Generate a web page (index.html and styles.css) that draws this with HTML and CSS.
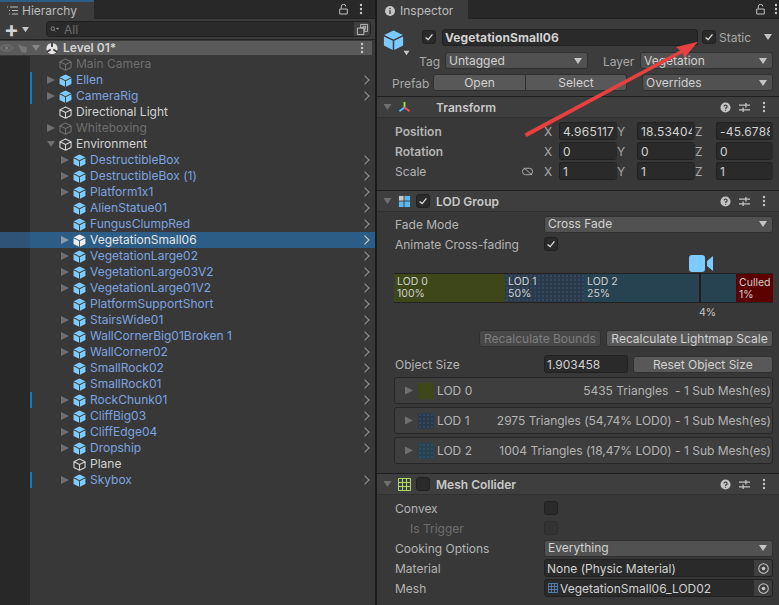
FILE: index.html
```html
<!DOCTYPE html>
<html lang="en">
<head>
<meta charset="utf-8">
<title>Unity Editor</title>
<link rel="stylesheet" href="styles.css">
</head>
<body>
<svg class="defs" width="0" height="0" aria-hidden="true">
  <symbol id="cube-line" viewBox="0 0 14 14"><path d="M7 1 L13 4 V10.2 L7 13.2 L1 10.2 V4 Z M1 4 L7 7 L13 4 M7 7 V13.2" fill="none" stroke="currentColor" stroke-width="1.2" stroke-linejoin="round"/></symbol>
  <symbol id="cube-fill" viewBox="0 0 14 14"><path d="M7 .6 L13.2 3.6 L7 6.6 L.8 3.6 Z" fill="currentColor"/><path d="M.6 4.6 L6.5 7.5 V13.6 L.6 10.7 Z M13.4 4.6 L7.5 7.5 V13.6 L13.4 10.7 Z" fill="currentColor"/></symbol>
  <symbol id="chev" viewBox="0 0 8 10"><path d="M1.500 .6 L6 5 L1.500 9.400" fill="none" stroke="currentColor" stroke-width="1.2"/></symbol>
  <symbol id="tri-r" viewBox="0 0 8 8"><path d="M0 0 L8 4 L0 8 Z" fill="currentColor"/></symbol>
  <symbol id="tri-d" viewBox="0 0 8 8"><path d="M0 1 H8 L4 7 Z" fill="currentColor"/></symbol>
  <symbol id="check" viewBox="0 0 14 14"><path d="M3 7.500 L6 10 L11 4" fill="none" stroke="currentColor" stroke-width="1.5"/></symbol>
  <symbol id="lock" viewBox="0 0 10 12"><path d="M2.500 5 V3 A2.500 2.500 0 0 1 7.600 2.600 M.8 5.500 H9.200 V11 H.8 Z" fill="none" stroke="currentColor" stroke-width="1.1"/></symbol>
  <symbol id="dots" viewBox="0 0 4 12"><circle cx="2" cy="2" r="1.200" fill="currentColor"/><circle cx="2" cy="6" r="1.200" fill="currentColor"/><circle cx="2" cy="10" r="1.200" fill="currentColor"/></symbol>
  <symbol id="help" viewBox="0 0 12 12"><circle cx="6" cy="6" r="5.500" fill="currentColor"/><path d="M4.400 4.700 A1.700 1.600 0 1 1 6 6.600 V7.400 M6 8.400 V9.600" fill="none" stroke="#3e3e3e" stroke-width="1.300"/></symbol>
  <symbol id="sliders" viewBox="0 0 12 12"><path d="M0 3.500 H12 M0 8.500 H12 M7.500 1 V6 M4.500 6 V11" fill="none" stroke="currentColor" stroke-width="1.400"/></symbol>
  <symbol id="target" viewBox="0 0 12 12"><circle cx="6" cy="6" r="5.200" fill="none" stroke="currentColor" stroke-width="1.100"/><circle cx="6" cy="6" r="2" fill="currentColor"/></symbol>
</svg>

<div class="app">
  <section class="hierarchy">
    <header class="tabbar">
      <div class="tab tab-h">
        <svg class="tab-list" viewBox="0 0 11 9"><path d="M0 1 H1 M3 1 H11 M2 4.500 H3 M5 4.500 H11 M2 8 H3 M5 8 H11" stroke="currentColor" fill="none"/></svg>
        <span>Hierarchy</span>
      </div>
      <div class="tab-tools">
        <svg class="ico-lock"><use href="#lock"/></svg>
        <svg class="ico-dots"><use href="#dots"/></svg>
      </div>
    </header>
    <div class="toolbar">
      <span class="plus">+</span>
      <svg class="tri-sm"><use href="#tri-d"/></svg>
      <div class="search">
        <svg class="search-ico" viewBox="0 0 10 8"><circle cx="3" cy="3" r="2" fill="none" stroke="currentColor"/><path d="M4.500 4.500 L6.500 6.500 M7 2.500 H10 L8.500 4 Z" stroke="currentColor" fill="currentColor" stroke-width=".6"/></svg>
        <span class="search-text">All</span>
        <span class="search-end"><svg viewBox="0 0 14 14"><path d="M5 1.500 H12.500 V9 H9 V5 H5 Z M1.500 5.500 H8.500 V12.500 H1.500 Z M7 3.500 H10.500 V7" fill="none" stroke="currentColor"/></svg></span>
      </div>
    </div>
    <div class="scene-row">
      <svg class="eye" viewBox="0 0 14 9"><path d="M0 4.500 Q7 -2.500 14 4.500 Q7 11.500 0 4.500 Z" fill="none" stroke="currentColor"/><circle cx="7" cy="4.500" r="2" fill="currentColor"/></svg>
      <svg class="hand" viewBox="0 0 12 12"><path d="M1 1 L5 3 L11 5 L10 11 L5 10 Z" fill="currentColor"/></svg>
      <svg class="scene-tri"><use href="#tri-d"/></svg>
      <svg class="scene-ico" viewBox="0 0 14 14"><circle cx="7" cy="7" r="6.500" fill="#e6e6e6"/><path d="M7 7 V0 M7 7 L1 11 M7 7 L13 11" stroke="#3c3c3c" stroke-width="2.200"/><circle cx="7" cy="7" r="2" fill="#e6e6e6"/></svg>
      <span class="scene-name">Level 01*</span>
      <svg class="scene-dots"><use href="#dots"/></svg>
    </div>
    <div class="tree">
      <div class="row l1 dim"><i class="tw"></i><svg class="cb"><use href="#cube-line"/></svg><span>Main Camera</span></div>
      <div class="row l1 blue mark"><svg class="tw"><use href="#tri-r"/></svg><svg class="cb fill"><use href="#cube-fill"/></svg><span>Ellen</span><svg class="chev"><use href="#chev"/></svg></div>
      <div class="row l1 blue mark"><svg class="tw"><use href="#tri-r"/></svg><svg class="cb fill"><use href="#cube-fill"/></svg><span>CameraRig</span><svg class="chev"><use href="#chev"/></svg></div>
      <div class="row l1"><i class="tw"></i><svg class="cb"><use href="#cube-line"/></svg><span>Directional Light</span></div>
      <div class="row l1 dim"><svg class="tw"><use href="#tri-r"/></svg><svg class="cb"><use href="#cube-line"/></svg><span>Whiteboxing</span></div>
      <div class="row l1"><svg class="tw"><use href="#tri-d"/></svg><svg class="cb"><use href="#cube-line"/></svg><span>Environment</span></div>
      <div class="row l2 blue"><svg class="tw"><use href="#tri-r"/></svg><svg class="cb fill"><use href="#cube-fill"/></svg><span>DestructibleBox</span><svg class="chev"><use href="#chev"/></svg></div>
      <div class="row l2 blue"><svg class="tw"><use href="#tri-r"/></svg><svg class="cb fill"><use href="#cube-fill"/></svg><span>DestructibleBox (1)</span><svg class="chev"><use href="#chev"/></svg></div>
      <div class="row l2 blue"><svg class="tw"><use href="#tri-r"/></svg><svg class="cb fill"><use href="#cube-fill"/></svg><span>Platform1x1</span><svg class="chev"><use href="#chev"/></svg></div>
      <div class="row l2 blue"><i class="tw"></i><svg class="cb fill"><use href="#cube-fill"/></svg><span>AlienStatue01</span><svg class="chev"><use href="#chev"/></svg></div>
      <div class="row l2 blue"><i class="tw"></i><svg class="cb fill"><use href="#cube-fill"/></svg><span>FungusClumpRed</span><svg class="chev"><use href="#chev"/></svg></div>
      <div class="row l2 selected"><svg class="tw"><use href="#tri-r"/></svg><svg class="cb fill"><use href="#cube-fill"/></svg><span>VegetationSmall06</span><svg class="chev"><use href="#chev"/></svg></div>
      <div class="row l2 blue"><svg class="tw"><use href="#tri-r"/></svg><svg class="cb fill"><use href="#cube-fill"/></svg><span>VegetationLarge02</span><svg class="chev"><use href="#chev"/></svg></div>
      <div class="row l2 blue"><svg class="tw"><use href="#tri-r"/></svg><svg class="cb fill"><use href="#cube-fill"/></svg><span>VegetationLarge03V2</span><svg class="chev"><use href="#chev"/></svg></div>
      <div class="row l2 blue"><svg class="tw"><use href="#tri-r"/></svg><svg class="cb fill"><use href="#cube-fill"/></svg><span>VegetationLarge01V2</span><svg class="chev"><use href="#chev"/></svg></div>
      <div class="row l2 blue"><i class="tw"></i><svg class="cb fill"><use href="#cube-fill"/></svg><span>PlatformSupportShort</span><svg class="chev"><use href="#chev"/></svg></div>
      <div class="row l2 blue"><svg class="tw"><use href="#tri-r"/></svg><svg class="cb fill"><use href="#cube-fill"/></svg><span>StairsWide01</span><svg class="chev"><use href="#chev"/></svg></div>
      <div class="row l2 blue"><svg class="tw"><use href="#tri-r"/></svg><svg class="cb fill"><use href="#cube-fill"/></svg><span>WallCornerBig01Broken 1</span><svg class="chev"><use href="#chev"/></svg></div>
      <div class="row l2 blue"><svg class="tw"><use href="#tri-r"/></svg><svg class="cb fill"><use href="#cube-fill"/></svg><span>WallCorner02</span><svg class="chev"><use href="#chev"/></svg></div>
      <div class="row l2 blue"><i class="tw"></i><svg class="cb fill"><use href="#cube-fill"/></svg><span>SmallRock02</span><svg class="chev"><use href="#chev"/></svg></div>
      <div class="row l2 blue"><i class="tw"></i><svg class="cb fill"><use href="#cube-fill"/></svg><span>SmallRock01</span><svg class="chev"><use href="#chev"/></svg></div>
      <div class="row l2 blue mark"><svg class="tw"><use href="#tri-r"/></svg><svg class="cb fill"><use href="#cube-fill"/></svg><span>RockChunk01</span><svg class="chev"><use href="#chev"/></svg></div>
      <div class="row l2 blue"><svg class="tw"><use href="#tri-r"/></svg><svg class="cb fill"><use href="#cube-fill"/></svg><span>CliffBig03</span><svg class="chev"><use href="#chev"/></svg></div>
      <div class="row l2 blue"><svg class="tw"><use href="#tri-r"/></svg><svg class="cb fill"><use href="#cube-fill"/></svg><span>CliffEdge04</span><svg class="chev"><use href="#chev"/></svg></div>
      <div class="row l2 blue"><svg class="tw"><use href="#tri-r"/></svg><svg class="cb fill"><use href="#cube-fill"/></svg><span>Dropship</span><svg class="chev"><use href="#chev"/></svg></div>
      <div class="row l2"><i class="tw"></i><svg class="cb"><use href="#cube-line"/></svg><span>Plane</span></div>
      <div class="row l2 blue mark"><svg class="tw"><use href="#tri-r"/></svg><svg class="cb fill"><use href="#cube-fill"/></svg><span>Skybox</span><svg class="chev"><use href="#chev"/></svg></div>
    </div>
  </section>

  <section class="inspector">
    <header class="tabbar">
      <div class="tab tab-i">
        <svg class="tab-info" viewBox="0 0 10 10"><circle cx="5" cy="5" r="5" fill="currentColor"/><path d="M5 2 V3.200 M5 4.300 V8" stroke="#3c3c3c" stroke-width="1.400"/></svg>
        <span>Inspector</span>
      </div>
      <div class="tab-tools tools-i">
        <svg class="ico-lock"><use href="#lock"/></svg>
        <svg class="ico-dots"><use href="#dots"/></svg>
      </div>
    </header>

    <div class="objhead">
      <div class="obj-main">
        <div class="bigicon">
          <svg class="bigcube"><use href="#cube-fill"/></svg>
          <svg class="tri-xs"><use href="#tri-d"/></svg>
        </div>
        <span class="chk on"><svg><use href="#check"/></svg></span>
        <span class="field namefield">VegetationSmall06</span>
        <span class="chk on"><svg><use href="#check"/></svg></span>
        <span class="static">Static</span>
        <svg class="tri-md static-tri"><use href="#tri-d"/></svg>
      </div>
      <div class="obj-tag">
        <span class="lab tag-lab">Tag</span>
        <span class="drop drop-tag">Untagged<svg class="tri-md"><use href="#tri-d"/></svg></span>
        <span class="lab layer-lab">Layer</span>
        <span class="drop drop-layer">Vegetation<svg class="tri-md"><use href="#tri-d"/></svg></span>
      </div>
      <div class="obj-prefab">
        <span class="lab prefab-lab">Prefab</span>
        <span class="btn btn-open">Open</span>
        <span class="btn btn-select">Select</span>
        <span class="drop drop-over">Overrides<svg class="tri-md"><use href="#tri-d"/></svg></span>
      </div>
    </div>

    <div class="comphead">
      <svg class="tri-comp"><use href="#tri-d"/></svg>
      <svg class="comp-ico" viewBox="0 0 14 14"><path d="M7 7 V1" stroke="#9fe04a" stroke-width="2"/><path d="M7 7 L1.500 11" stroke="#53b8f5" stroke-width="2"/><path d="M7 7 L12.500 11" stroke="#e8584e" stroke-width="2"/></svg>
      <span class="comp-title title-t">Transform</span>
      <svg class="ci help"><use href="#help"/></svg><svg class="ci sl"><use href="#sliders"/></svg><svg class="ci dt"><use href="#dots"/></svg>
    </div>
    <div class="tf-body">
      <div class="tf-row"><span class="tf-lab strong">Position</span><span class="ax">X</span><span class="field num">4.965117</span><span class="ax">Y</span><span class="field num">18.53404</span><span class="ax">Z</span><span class="field num">-45.67888</span></div>
      <div class="tf-row"><span class="tf-lab strong">Rotation</span><span class="ax">X</span><span class="field num">0</span><span class="ax">Y</span><span class="field num">0</span><span class="ax">Z</span><span class="field num">0</span></div>
      <div class="tf-row"><span class="tf-lab">Scale<svg class="unlink" viewBox="0 0 13 9"><path d="M4 1 H8 A3.500 3.500 0 0 1 8 8 H4 A3.500 3.500 0 0 1 4 1 Z M2 .5 L11 8.500" fill="none" stroke="currentColor"/></svg></span><span class="ax">X</span><span class="field num">1</span><span class="ax">Y</span><span class="field num">1</span><span class="ax">Z</span><span class="field num">1</span></div>
    </div>

    <div class="comphead">
      <svg class="tri-comp"><use href="#tri-d"/></svg>
      <svg class="comp-ico" viewBox="0 0 14 14"><rect x="1" y="1" width="5" height="5" fill="#c8c8c8"/><rect x="7" y="1" width="6" height="5" fill="#5cb8f0"/><rect x="1" y="7" width="5" height="6" fill="#5cb8f0"/><rect x="7" y="7" width="6" height="6" fill="#5cb8f0"/></svg>
      <span class="chk on comp-chk"><svg><use href="#check"/></svg></span>
      <span class="comp-title">LOD Group</span>
      <svg class="ci help"><use href="#help"/></svg><svg class="ci sl"><use href="#sliders"/></svg><svg class="ci dt"><use href="#dots"/></svg>
    </div>
    <div class="lod-body">
      <div class="prop"><span class="prop-lab">Fade Mode</span><span class="drop prop-val">Cross Fade<svg class="tri-md"><use href="#tri-d"/></svg></span></div>
      <div class="prop"><span class="prop-lab">Animate Cross-fading</span><span class="chk on"><svg><use href="#check"/></svg></span></div>
      <div class="camrow"><svg class="cam" viewBox="0 0 24 17"><rect x="0" y="0" width="16" height="17" rx="3" fill="currentColor"/><path d="M18 6 L24 1 V16 L18 11 Z" fill="currentColor"/></svg></div>
      <div class="lodbar">
        <div class="seg s0"><span>LOD 0</span><span>100%</span></div>
        <div class="seg s1"><span>LOD 1</span><span>50%</span></div>
        <div class="seg s2"><span>LOD 2</span><span>25%</span><i class="tick"></i></div>
        <div class="seg s3"><span>Culled</span><span>1%</span></div>
      </div>
      <div class="pct">4%</div>
      <div class="btnrow"><span class="btn btn-off">Recalculate Bounds</span><span class="btn btn-light">Recalculate Lightmap Scale</span></div>
      <div class="sizerow"><span class="prop-lab">Object Size</span><span class="field sizefield">1.903458</span><span class="btn btn-reset">Reset Object Size</span></div>
      <div class="lodrow"><svg class="lod-tri"><use href="#tri-r"/></svg><i class="sw sw0"></i><span class="lod-name">LOD 0</span><span class="lod-info">5435 Triangles&nbsp; - 1 Sub Mesh(es)</span></div>
      <div class="lodrow"><svg class="lod-tri"><use href="#tri-r"/></svg><i class="sw sw1"></i><span class="lod-name">LOD 1</span><span class="lod-info">2975 Triangles (54,74% LOD0) - 1 Sub Mesh(es)</span></div>
      <div class="lodrow"><svg class="lod-tri"><use href="#tri-r"/></svg><i class="sw sw2"></i><span class="lod-name">LOD 2</span><span class="lod-info">1004 Triangles (18,47% LOD0) - 1 Sub Mesh(es)</span></div>
    </div>

    <div class="comphead">
      <svg class="tri-comp"><use href="#tri-d"/></svg>
      <svg class="comp-ico" viewBox="0 0 14 14"><path d="M.5 .5 H13.500 V13.500 H.5 Z M4.800 .5 V13.500 M9.200 .5 V13.500 M.5 4.800 H13.500 M.5 9.200 H13.500" fill="none" stroke="#b9e86c"/></svg>
      <span class="chk comp-chk"></span>
      <span class="comp-title">Mesh Collider</span>
      <svg class="ci help"><use href="#help"/></svg><svg class="ci sl"><use href="#sliders"/></svg><svg class="ci dt"><use href="#dots"/></svg>
    </div>
    <div class="mesh-body">
      <div class="prop"><span class="prop-lab">Convex</span><span class="chk"></span></div>
      <div class="prop"><span class="prop-lab sub">Is Trigger</span><span class="chk off"></span></div>
      <div class="prop"><span class="prop-lab">Cooking Options</span><span class="drop prop-val">Everything<svg class="tri-md"><use href="#tri-d"/></svg></span></div>
      <div class="prop"><span class="prop-lab">Material</span><span class="field objfield">None (Physic Material)<span class="pick"><svg><use href="#target"/></svg></span></span></div>
      <div class="prop"><span class="prop-lab">Mesh</span><span class="field objfield"><svg class="mesh-ico" viewBox="0 0 11 11"><path d="M.5 .5 H10.500 V10.500 H.5 Z M3.800 .5 V10.500 M7.200 .5 V10.500 M.5 3.800 H10.500 M.5 7.200 H10.500" fill="none" stroke="#5d86b8"/></svg>VegetationSmall06_LOD02<span class="pick"><svg><use href="#target"/></svg></span></span></div>
    </div>
  </section>
</div>

<svg class="arrow" viewBox="0 0 779 605" aria-hidden="true">
  <path d="M524.500 133.500 L680 50.500 L676 47 L698 41.700 L684.500 57.500 L682.500 53 L526.500 137 Z" fill="#e8403f"/>
</svg>
</body>
</html>
```

FILE: styles.css
```css
* { box-sizing: border-box; }
html, body { margin: 0; height: 100%; overflow: hidden; }
body {
  font-family: Inter, "Noto Sans", sans-serif;
  font-size: 12px;
  font-feature-settings: "calt" 0;
  color: #c4c4c4;
  background: #383838;
  position: relative;
}
.defs { position: absolute; }
.app { display: flex; height: 605px; width: 779px; }
svg { display: block; flex: none; }

.hierarchy { width: 375px; flex: none; display: flex; flex-direction: column; border-right: 2px solid #1a1a1a; box-sizing: content-box; }
.inspector { flex: 1; min-width: 0; display: flex; flex-direction: column; background: #383838; }

.tabbar { height: 19px; background: #282828; display: flex; justify-content: space-between; flex: none; border-bottom: 1px solid #232323; }
.tab { height: 19px; background: #3c3c3c; display: flex; align-items: center; font-size: 12px; color: #bdbdbd; }
.tab-h { width: 94px; border-top: 2px solid #2c5d87; padding-left: 7px; gap: 4px; }
.tab-i { width: 91px; padding: 2px 0 0 8px; gap: 5px; }
.tab-list { width: 11px; height: 9px; color: #bdbdbd; }
.tab-info { width: 10px; height: 10px; color: #c4c4c4; }
.tab-tools { display: flex; align-items: center; gap: 11px; padding-right: 12px; }
.tools-i { padding-right: 1px; gap: 9px; }
.ico-lock { width: 9px; height: 11px; color: #c4c4c4; }
.ico-dots { width: 4px; height: 12px; color: #c4c4c4; }

.toolbar { height: 21px; flex: none; background: #3c3c3c; border-bottom: 1px solid #232323; display: flex; align-items: center; padding-left: 4px; }
.plus { font-size: 22px; line-height: 20px; font-weight: 700; color: #d4d4d4; width: 13px; text-align: center; }
.tri-sm { width: 7px; height: 7px; color: #c4c4c4; margin-left: 5px; }
.search { margin-left: 17px; width: 325px; height: 16px; background: #2a2a2a; border: 1px solid #202020; border-radius: 4px; display: flex; align-items: center; padding-left: 3px; overflow: hidden; }
.search-ico { width: 9px; height: 7px; color: #9a9a9a; }
.search-text { margin-left: 5px; color: #6e6e6e; font-size: 12px; }
.search-end { margin-left: auto; width: 16px; height: 16px; background: #3e3e3e; display: flex; align-items: center; justify-content: center; color: #c4c4c4; }
.search-end svg { width: 13px; height: 13px; }

.scene-row { height: 14px; margin: 1px 0; line-height: 14px; flex: none; background: #5a5a5a; width: 372px; display: flex; align-items: center; font-weight: 600; color: #d2d2d2; }
.eye { width: 13px; height: 8px; color: #7a7a7a; }
.hand { width: 11px; height: 11px; margin-left: 4px; color: #767676; }
.scene-tri { width: 8px; height: 8px; color: #868686; margin-left: 4px; }
.scene-ico { width: 12px; height: 13px; margin-left: 6px; }
.scene-name { margin-left: 5px; }
.scene-dots { width: 4px; height: 12px; margin-left: auto; margin-right: 8px; color: #c8c8c8; }

.tree { flex: 1; background: linear-gradient(to right, #282828 30px, #383838 30px); }
.row { height: 16px; display: flex; align-items: center; width: 100%; color: #d2d2d2; }
.row.l1 { padding-left: 47px; }
.row.l2 { padding-left: 61px; }
.row .tw { width: 8px; height: 8px; color: #6f6f6f; flex: none; }
.row .cb { width: 13px; height: 13px; margin-left: 4px; color: #d2d2d2; }
.row .cb.fill { color: #7ccbff; }
.row span { margin-left: 4px; padding-bottom: 2px; white-space: nowrap; }
.row .chev { width: 8px; height: 10px; margin-left: auto; margin-right: 4px; color: #8f8f8f; }
.row.dim, .row.dim .cb { color: #6e6e6e; }
.row.blue { color: #7ba4e0; }
.row.selected { background: linear-gradient(to right, #2f5377 30px, #2c5d87 30px); color: #e6e6e6; }
.row.selected .cb { color: #eeeeee; }
.row.selected .chev { color: #c8c8c8; }
.row.selected .tw { color: #8b9bab; }
.row.mark { background: linear-gradient(to right, transparent 30px, #0e7ec0 30px, #0e7ec0 32px, transparent 32px); }

.field { background: #2a2a2a; border: 1px solid #212121; border-radius: 3px; color: #d2d2d2; display: flex; align-items: center; overflow: hidden; white-space: nowrap; }
.drop { background: #515151; border: 1px solid #303030; border-radius: 3px; color: #d2d2d2; display: flex; align-items: center; justify-content: space-between; padding: 0 5px 0 3px; height: 17px; }
.btn { background: #585858; border: 1px solid #303030; border-radius: 3px; color: #d2d2d2; display: flex; align-items: center; justify-content: center; height: 17px; }
.chk { width: 14px; height: 14px; background: #2a2a2a; border: 1px solid #212121; border-radius: 3px; color: #dedede; flex: none; display: flex; align-items: center; justify-content: center; }
.chk svg { width: 12px; height: 12px; }
.chk.off { background: #333333; border-color: #2c2c2c; }
.tri-md { width: 8px; height: 8px; color: #c4c4c4; flex: none; }
.lab { color: #a8a8a8; padding-top: 2px; }

.objhead { height: 78px; flex: none; background: #3c3c3c; border-bottom: 1px solid #1f1f1f; padding-top: 9px; }
.obj-main { display: flex; align-items: center; height: 18px; padding-left: 6px; }
.bigicon { width: 26px; height: 26px; align-self: flex-start; margin-top: 1px; position: relative; }
.bigcube { width: 21px; height: 22px; color: #7ccbff; }
.tri-xs { width: 7px; height: 6px; color: #c4c4c4; position: absolute; left: 20px; top: 21px; }
.obj-main > .chk:nth-child(2) { margin-left: 13px; }
.namefield { width: 256px; height: 17px; margin-left: 6px; padding-left: 2px; font-weight: 700; letter-spacing: .1px; }
.obj-main > .chk:nth-child(4) { margin-left: 4px; }
.static { color: #a8a8a8; margin-left: 3px; }
.static-tri { margin-left: 13px; }
.obj-tag { display: flex; align-items: center; height: 17px; margin-top: 6px; }
.tag-lab { width: 63px; text-align: right; margin-right: 5px; }
.drop-tag { width: 143px; }
.layer-lab { margin-left: 15px; width: 37px; }
.drop-layer { width: 133px; }
.obj-prefab { display: flex; align-items: center; height: 17px; margin-top: 5px; }
.prefab-lab { margin-left: 15px; width: 41px; }
.btn-open { width: 93px; border-radius: 3px 0 0 3px; }
.btn-select { width: 101px; border-radius: 0 3px 3px 0; border-left: 0; }
.drop-over { width: 131px; margin-left: 15px; }

.comphead { height: 21px; flex: none; background: #3e3e3e; border-bottom: 1px solid #303030; display: flex; align-items: center; padding-left: 6px; font-weight: 600; color: #c8c8c8; }
.tri-comp { width: 9px; height: 8px; color: #6f6f6f; }
.comp-ico { width: 13px; height: 13px; margin-left: 6px; }
.comp-chk { margin-left: 5px; }
.comp-title { margin-left: 6px; }
.title-t { margin-left: 25px; }
.ci { color: #c4c4c4; }
.help { width: 11px; height: 11px; margin-left: auto; }
.sl { width: 11px; height: 11px; margin-left: 8px; }
.dt { width: 4px; height: 12px; margin-left: 12px; margin-right: 13px; }

.tf-body { height: 73px; flex: none; padding: 4px 0 0 18px; border-bottom: 1px solid #1f1f1f; }
.tf-row { display: grid; grid-template-columns: 149px 15px 58px 20px 58px 21px 57px; align-items: center; height: 18px; margin-bottom: 2px; }
.tf-lab { color: #b4b4b4; display: flex; justify-content: space-between; align-items: center; padding-right: 10px; }
.tf-lab.strong { font-weight: 600; }
.unlink { width: 12px; height: 9px; color: #b4b4b4; }
.ax { color: #a8a8a8; font-size: 12px; }
.num { height: 18px; padding-left: 3px; border-right: 3px solid #2a2a2a; letter-spacing: .2px; }

.lod-body { height: 262px; flex: none; padding: 3px 6px 0 18px; border-bottom: 1px solid #1f1f1f; }
.prop { display: flex; align-items: center; height: 18px; margin-bottom: 2px; }
.prop-lab { width: 149px; flex: none; color: #b4b4b4; padding-top: 1px; }
.prop-lab.sub { padding-left: 15px; color: #6e6e6e; }
.prop-val { width: 229px; padding-bottom: 1px; }
.camrow { height: 18px; display: flex; padding-left: 294px; }
.cam { width: 24px; height: 17px; color: #7ccbff; }
.lodbar { display: flex; height: 30px; width: 379px; margin-left: -1px; background: #222; font-size: 10.500px; line-height: 12px; color: #cfcfcf; }
.seg { display: flex; flex-direction: column; justify-content: center; padding-left: 3px; position: relative; border-top: 1px solid #222; border-bottom: 1px solid #222; }
.s0 { width: 111px; background: #3d4719; }
.s1 { width: 79px; background: #2a3a4b radial-gradient(#35495e 1px, transparent 1px) 0 0 / 4px 4px; }
.s2 { width: 152px; background: #274250; }
.s3 { width: 37px; background: #5c0000; padding-top: 1px; }
.tick { position: absolute; left: 115px; top: 0; bottom: 0; width: 2px; background: #1e1e1e; }
.pct { height: 19px; padding-left: 304px; font-size: 10.500px; line-height: 19px; }
.btnrow { display: flex; justify-content: flex-end; gap: 5px; margin-top: 8px; }
.btn-off { width: 122px; color: #7d7d7d; background: #484848; }
.btn-light { width: 167px; }
.sizerow { display: flex; align-items: center; height: 18px; margin-top: 8px; }
.sizefield { width: 84px; height: 18px; padding-left: 2px; }
.btn-reset { width: 141px; margin-left: 5px; }
.lodrow { width: 379px; height: 27px; margin: 3px 0 0 -1px; background: #3e3e3e; border: 1px solid #262626; border-radius: 3px; display: flex; align-items: center; padding-left: 10px; }
.sizerow + .lodrow { margin-top: 4px; }
.lod-tri { width: 8px; height: 9px; color: #6f6f6f; }
.sw { width: 16px; height: 16px; margin-left: 5px; flex: none; }
.sw0 { background: #3d4719; }
.sw1 { background: #2a3a4b radial-gradient(#35495e 1px, transparent 1px) 0 0 / 4px 4px; }
.sw2 { background: #274250 radial-gradient(#2f4f60 1px, transparent 1px) 0 0 / 4px 4px; }
.lod-name { margin-left: 3px; color: #b4b4b4; }
.lod-info { margin-left: auto; margin-right: 1px; white-space: nowrap; color: #b4b4b4; }

.mesh-body { flex: 1; padding: 4px 6px 0 18px; }
.objfield { width: 229px; height: 18px; padding-left: 2px; }
.pick { margin-left: auto; width: 18px; height: 16px; background: #3e3e3e; display: flex; align-items: center; justify-content: center; color: #c4c4c4; }
.pick svg { width: 11px; height: 11px; }
.mesh-ico { width: 10px; height: 10px; margin-right: 2px; margin-left: 1px; }

.arrow { position: absolute; left: 0; top: 0; width: 779px; height: 605px; pointer-events: none; }
```
